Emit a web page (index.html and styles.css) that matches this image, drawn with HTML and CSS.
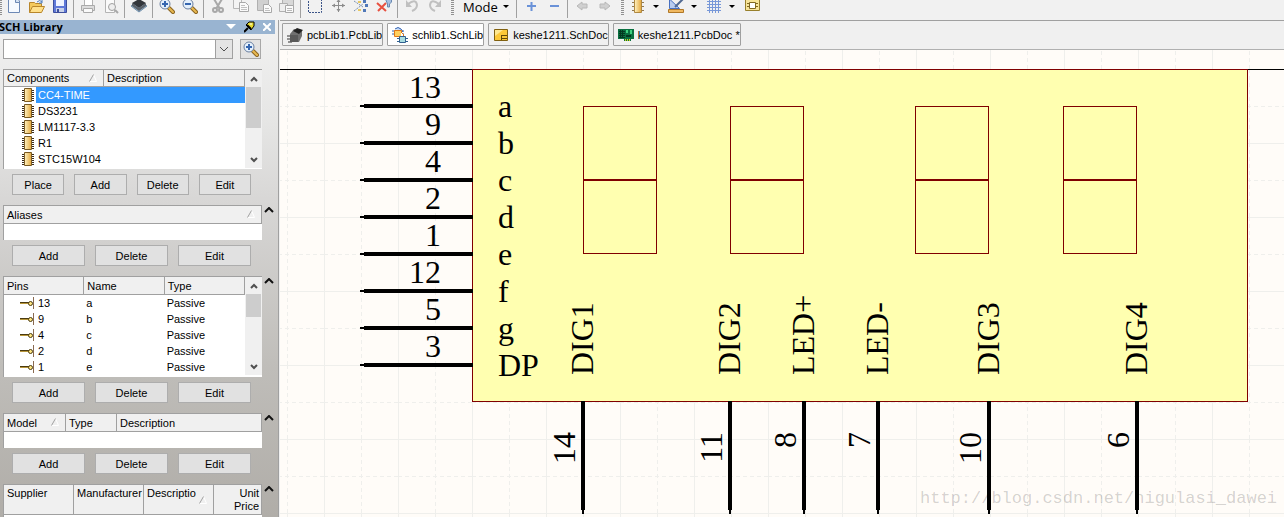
FILE: index.html
```
<!DOCTYPE html>
<html lang="en">
<head>
    <meta charset="UTF-8">
    <meta name="viewport" content="width=device-width, initial-scale=1.0">
    <title>schlib1.SchLib</title>
    <link rel="stylesheet" href="styles.css">
</head>
<body>
    <!-- Shared icons -->
    <svg class="sprite" aria-hidden="true">
        <defs>
            <linearGradient id="gold" x1="0" x2="1">
                <stop offset="0" stop-color="#fff3c4"/>
                <stop offset="1" stop-color="#e3a63a"/>
            </linearGradient>
        </defs>
        <symbol id="chip" viewBox="0 0 12 14">
            <path d="M0 2.5h12M0 4.5h12M0 6.5h12M0 8.5h12M0 10.5h12M0 12.5h12" stroke="#3b2d1c"/>
            <path d="M2.5.5h7v13h-7z" fill="url(#gold)" stroke="#7a5a22"/>
        </symbol>
        <symbol id="pin" viewBox="0 0 14 12">
            <path d="M0 6h9" stroke="#4a3a10" stroke-width="2"/>
            <path d="M0 6.5h9" stroke="#b8963a"/>
            <circle cx="10.5" cy="6.5" r="2" fill="#ffe680" stroke="#4a3a10"/>
            <path d="M13.5 0v12" stroke="#8a6a50"/>
        </symbol>
        <symbol id="sort" viewBox="0 0 8 8">
            <path d="M4.5.5l3 7h-7" fill="none" stroke="#fff"/>
            <path d="M.5 7.5l4-7" stroke="#a0a0a0"/>
        </symbol>
        <symbol id="collapse" viewBox="0 0 10 6">
            <path d="M1 5l4-4 4 4" fill="none" stroke="#111" stroke-width="2"/>
        </symbol>
        <symbol id="up" viewBox="0 0 8 6">
            <path d="M1 5l3-3 3 3" fill="none" stroke="#505050" stroke-width="2"/>
        </symbol>
        <symbol id="down" viewBox="0 0 8 6">
            <path d="M1 1l3 3 3-3" fill="none" stroke="#505050" stroke-width="2"/>
        </symbol>
        <symbol id="caret" viewBox="0 0 6 4">
            <path d="M0 0h6L3 3z"/>
        </symbol>
        <symbol id="zoom-in" viewBox="0 0 16 16">
            <path d="M10 10l4 4" stroke="#8a6420" stroke-width="4" stroke-linecap="round"/>
            <path d="M10 10l4 4" stroke="#e8b850" stroke-width="2" stroke-linecap="round"/>
            <circle cx="6" cy="6" r="5" fill="#e4f0fc" stroke="#6a7fa0"/>
            <path d="M3 6h6M6 3v6" stroke="#3566b0" stroke-width="2"/>
        </symbol>
        <symbol id="zoom-out" viewBox="0 0 16 16">
            <path d="M10 10l4 4" stroke="#8a6420" stroke-width="4" stroke-linecap="round"/>
            <path d="M10 10l4 4" stroke="#e8b850" stroke-width="2" stroke-linecap="round"/>
            <circle cx="6" cy="6" r="5" fill="#e4f0fc" stroke="#6a7fa0"/>
            <path d="M3 6h6" stroke="#3566b0" stroke-width="2"/>
        </symbol>
    </svg>

    <div class="toolbar">
        <span class="grip"></span>
        <button class="tool" aria-label="New"><svg viewBox="0 2 16 14"><path d="M2.5 0h8l3 3v11.5h-11z" fill="#f6faff" stroke="#6d89b5"/><path d="M9.5 0v4.5h4" fill="#cfdff3" stroke="#6d89b5"/></svg></button>
        <button class="tool" aria-label="Open"><svg viewBox="0 2 16 14"><path d="M.5 14.5V4.500h5l1 1h6v3" fill="#f4c95c" stroke="#b8862b"/><path d="M.5 14.5l3-6h12l-3 6z" fill="#ffe08a" stroke="#b8862b"/><path d="M8 4q3-3 5 0m0-2v3h-3" fill="none" stroke="#4b7cc0"/></svg></button>
        <button class="tool" aria-label="Save"><svg viewBox="0 2 16 14"><path d="M1.5 1.5h13v13h-13z" fill="#5f79d8" stroke="#3d4f9e"/><path d="M4 1h8v7H4z" fill="#f0f4ff"/><path d="M4 10h8v4H4z" fill="#c9d2e8"/><path d="M5 11h2v3H5z" fill="#3d4f9e"/></svg></button>
        <span class="sep"></span>
        <button class="tool" aria-label="Print"><svg viewBox="0 2 16 14"><path d="M4.5 7V1h8v6" fill="#fff" stroke="#b4b4b4"/><path d="M1.5 7.5h13v5h-13z" fill="#dcdcdc" stroke="#aaa"/><path d="M3.5 10.500h9v4h-9z" fill="#fafafa" stroke="#aaa"/></svg></button>
        <button class="tool" aria-label="Print preview"><svg viewBox="0 2 16 14"><path d="M2.5 0h9v14.5h-9z" fill="#fafafa" stroke="#b4b4b4"/><circle cx="9" cy="9" r="3.5" fill="#eee" stroke="#a0a0a0"/><path d="M12 12l3 3" stroke="#a8a8a8" stroke-width="2"/></svg></button>
        <span class="sep"></span>
        <button class="tool" aria-label="Component browser"><svg viewBox="0 2 16 14"><path d="M0 8l8-5 8 5-8 6z" fill="#a8c4dc" stroke="#6d8ca8"/><path d="M1 5l7-4 7 4-7 5z" fill="#33373c"/><path d="M1 5v3l7 5 7-5V5l-7 5z" fill="#5b626a"/></svg></button>
        <span class="sep"></span>
        <button class="tool" aria-label="Zoom in"><svg viewBox="0 2 16 14"><use href="#zoom-in" width="16" height="16"/></svg></button>
        <button class="tool" aria-label="Zoom out"><svg viewBox="0 2 16 14"><use href="#zoom-out" width="16" height="16"/></svg></button>
        <span class="sep"></span>
        <button class="tool" aria-label="Cut"><svg viewBox="0 2 16 14"><path d="M4 1l6 10M12 1L6 11" stroke="#a8a8a8" stroke-width="2"/><circle cx="5" cy="12" r="2" fill="none" stroke="#a8a8a8" stroke-width="2"/><circle cx="11" cy="12" r="2" fill="none" stroke="#a8a8a8" stroke-width="2"/></svg></button>
        <button class="tool" aria-label="Copy"><svg viewBox="0 2 16 14"><path d="M.5 1.5h8v9h-8z" fill="#f4f4f4" stroke="#b8b8b8"/><path d="M6.5 4.5h6l3 3v6h-9z" fill="#fafafa" stroke="#a8a8a8"/><path d="M8 7.5h4M8 9.5h6M8 11.5h6" stroke="#c0c0c0"/></svg></button>
        <button class="tool" aria-label="Paste"><svg viewBox="0 2 16 14"><path d="M1.5 1.5h11v11h-11z" fill="#d0d0d0" stroke="#b0b0b0"/><path d="M7.5 6.5h5l3 3v5h-8z" fill="#fafafa" stroke="#a8a8a8"/><path d="M9 10.5h4M9 12.5h5" stroke="#c0c0c0"/></svg></button>
        <button class="tool" aria-label="Smart paste"><svg viewBox="0 2 16 14"><path d="M3.5 1.5h11v10h-11z" fill="#d8d8d8" stroke="#b0b0b0"/><path d="M.5 5.5h8v8h-8z" fill="#eee" stroke="#b0b0b0"/><path d="M6.5 7.5h8v7h-8z" fill="#fafafa" stroke="#a8a8a8"/><path d="M8 10.5h5M8 12.5h5" stroke="#b8b8b8"/></svg></button>
        <span class="sep"></span>
        <button class="tool" aria-label="Select area"><svg viewBox="0 2 16 14"><path d="M1.5 0v14.5h13V0" fill="none" stroke="#3c5488" stroke-dasharray="2 1"/></svg></button>
        <button class="tool" aria-label="Move"><svg viewBox="0 2 16 14"><path d="M8.5 1v13M2 7.5h13" stroke="#8c8c8c"/><path d="M6.5 4l2-3 2 3zM6.5 11l2 3 2-3zM5 5.500l-3 2 3 2zM12 5.500l3 2-3 2z" fill="#8c8c8c"/></svg></button>
        <button class="tool" aria-label="Deselect all"><svg viewBox="0 2 16 14"><path d="M1 3l9 6M1 13l9-7" stroke="#7890b0" stroke-dasharray="2 1"/><path d="M10 2h3v3h-3zM12 6h3v3h-3zM10 11h3v3h-3z" fill="#5078b8"/><path d="M5 3h3v2H5zM5 11h3v2H5z" fill="#e8c860"/></svg></button>
        <button class="tool" aria-label="Clear filter"><svg viewBox="0 2 16 14"><path d="M9.5 1h6v3l-2 2v3h-2V6z" fill="#a8c0e0" stroke="#6888b0"/><path d="M1 5l9 8M10 5l-8 8" stroke="#e85040" stroke-width="2"/></svg></button>
        <span class="sep"></span>
        <button class="tool" aria-label="Undo"><svg viewBox="0 2 16 14"><path d="M4 6q8-6 9 1 0 4-5 6" fill="none" stroke="#c0c0c0" stroke-width="2"/><path d="M2 2v7h6z" fill="#c0c0c0"/></svg></button>
        <button class="tool" aria-label="Redo"><svg viewBox="0 2 16 14"><path d="M12 6q-8-6-9 1 0 4 5 6" fill="none" stroke="#c0c0c0" stroke-width="2"/><path d="M14 2v7H8z" fill="#c0c0c0"/></svg></button>
        <span class="grip grip-inner"></span>
        <button class="mode">Mode <svg class="caret"><use href="#caret"/></svg></button>
        <span class="sep"></span>
        <button class="tool" aria-label="Add mode"><svg viewBox="0 2 16 14"><path d="M4 8h9M8.500 4v9" stroke="#6a92d8" stroke-width="2"/></svg></button>
        <button class="tool" aria-label="Remove mode"><svg viewBox="0 2 16 14"><path d="M4 8h9" stroke="#6a92d8" stroke-width="2"/></svg></button>
        <span class="sep"></span>
        <button class="tool" aria-label="Previous mode"><svg viewBox="0 2 16 14"><path d="M3 8l5-4v2h5v4H8v2z" fill="#d0d0d0" stroke="#b8b8b8"/></svg></button>
        <button class="tool" aria-label="Next mode"><svg viewBox="0 2 16 14"><path d="M13 8L8 4v2H3v4h5v2z" fill="#d0d0d0" stroke="#b8b8b8"/></svg></button>
        <span class="grip grip-inner"></span>
        <button class="tool-menu" aria-label="Place part"><svg viewBox="0 2 16 14"><path d="M2 4.500h12M2 8.500h12M2 12.500h12" stroke="#907850"/><path d="M4.500 1.500h7v13h-7z" fill="url(#gold)" stroke="#b08840"/></svg><svg class="caret"><use href="#caret"/></svg></button>
        <button class="tool-menu" aria-label="Drawing tools"><svg viewBox="0 2 16 14"><path d="M1.500 1v9.500h10z" fill="#b8ccf0" stroke="#4870c0"/><path d="M7 9l8-8" stroke="#506890" stroke-width="2"/><path d="M.5 11.500h15v3H.5z" fill="#f0b860" stroke="#b07828"/></svg><svg class="caret"><use href="#caret"/></svg></button>
        <button class="tool-menu" aria-label="Grids"><svg viewBox="0 2 16 14"><path d="M3.500 1v14M6.500 1v14M9.500 1v14M12.500 1v14M1 3.500h14M1 6.500h14M1 9.500h14M1 12.500h14" stroke="#7898d8"/></svg><svg class="caret"><use href="#caret"/></svg></button>
        <button class="tool-menu" aria-label="Model manager"><svg viewBox="0 2 16 14"><path d="M1.500 1.500h14v11h-14z" fill="#f8e498" stroke="#98802c"/><path d="M3 5.500h11M3 8.500h11" stroke="#806820"/><path d="M5.500 4.500h6v6h-6z" fill="#fff" stroke="#806820"/></svg></button>
    </div>

    <main class="main">
        <aside class="panel">
            <div class="panel-title">
                <h1>SCH Library</h1>
                <button aria-label="Panel menu"><svg width="10" height="6" viewBox="0 0 10 6"><path d="M0 0h10L5 5z" fill="#fff"/></svg></button>
                <button aria-label="Pin panel"><svg width="11" height="12" viewBox="0 0 11 12"><path d="M0 11l4-4" stroke="#000" stroke-width="2"/><path d="M2 4l3-3h5v4L7 9z" fill="#e8dc30" stroke="#000"/><path d="M6 3h2" stroke="#fff"/><path d="M3 4l4 4" stroke="#000" stroke-width="2"/></svg></button>
                <button aria-label="Close panel"><svg width="8" height="8" viewBox="0 0 8 8"><path d="M0 0l8 8M8 0L0 8" stroke="#fff" stroke-width="2"/></svg></button>
            </div>

            <div class="filter">
                <div class="combo">
                    <select aria-label="Filter"><option></option></select>
                    <span class="combo-arrow"><svg width="10" height="6" viewBox="0 0 10 6"><path d="M1 1l4 4 4-4" fill="none" stroke="#505050"/></svg></span>
                </div>
                <button class="search" aria-label="Search"><svg width="16" height="16"><use href="#zoom-in"/></svg></button>
            </div>

            <section class="block">
                <div class="list">
                    <table class="components">
                        <thead><tr><th>Components <svg class="sort"><use href="#sort"/></svg></th><th>Description</th></tr></thead>
                        <tbody>
                            <tr class="selected"><td><svg class="chip"><use href="#chip"/></svg><span>CC4-TIME</span></td><td></td></tr>
                            <tr><td><svg class="chip"><use href="#chip"/></svg><span>DS3231</span></td><td></td></tr>
                            <tr><td><svg class="chip"><use href="#chip"/></svg><span>LM1117-3.3</span></td><td></td></tr>
                            <tr><td><svg class="chip"><use href="#chip"/></svg><span>R1</span></td><td></td></tr>
                            <tr><td><svg class="chip"><use href="#chip"/></svg><span>STC15W104</span></td><td></td></tr>
                        </tbody>
                    </table>
                    <div class="scrollbar">
                        <svg><use href="#up"/></svg>
                        <span class="thumb thumb-long"></span>
                        <svg><use href="#down"/></svg>
                    </div>
                </div>
            </section>
            <div class="actions">
                <button>Place</button>
                <button>Add</button>
                <button>Delete</button>
                <button>Edit</button>
            </div>

            <section class="block">
                <div class="list">
                    <table class="aliases">
                        <thead><tr><th>Aliases <svg class="sort"><use href="#sort"/></svg></th></tr></thead>
                        <tbody><tr><td></td></tr></tbody>
                    </table>
                </div>
                <button class="collapse" aria-label="Collapse aliases"><svg><use href="#collapse"/></svg></button>
            </section>
            <div class="actions">
                <button>Add</button>
                <button>Delete</button>
                <button>Edit</button>
            </div>

            <section class="block">
                <div class="list list-pins">
                    <table class="pins">
                        <thead><tr><th>Pins</th><th>Name</th><th>Type</th></tr></thead>
                        <tbody>
                            <tr><td><svg class="pin"><use href="#pin"/></svg><span>13</span></td><td>a</td><td>Passive</td></tr>
                            <tr><td><svg class="pin"><use href="#pin"/></svg><span>9</span></td><td>b</td><td>Passive</td></tr>
                            <tr><td><svg class="pin"><use href="#pin"/></svg><span>4</span></td><td>c</td><td>Passive</td></tr>
                            <tr><td><svg class="pin"><use href="#pin"/></svg><span>2</span></td><td>d</td><td>Passive</td></tr>
                            <tr><td><svg class="pin"><use href="#pin"/></svg><span>1</span></td><td>e</td><td>Passive</td></tr>
                        </tbody>
                    </table>
                    <div class="scrollbar">
                        <svg><use href="#up"/></svg>
                        <span class="thumb"></span>
                        <svg><use href="#down"/></svg>
                    </div>
                </div>
                <button class="collapse" aria-label="Collapse pins"><svg><use href="#collapse"/></svg></button>
            </section>
            <div class="actions">
                <button>Add</button>
                <button>Delete</button>
                <button>Edit</button>
            </div>

            <section class="block">
                <div class="list">
                    <table class="models">
                        <thead><tr><th>Model <svg class="sort"><use href="#sort"/></svg></th><th>Type</th><th>Description</th></tr></thead>
                        <tbody><tr><td></td><td></td><td></td></tr></tbody>
                    </table>
                </div>
                <button class="collapse" aria-label="Collapse models"><svg><use href="#collapse"/></svg></button>
            </section>
            <div class="actions">
                <button>Add</button>
                <button>Delete</button>
                <button>Edit</button>
            </div>

            <section class="block">
                <div class="list">
                    <table class="suppliers">
                        <thead><tr><th>Supplier</th><th>Manufacturer</th><th>Descriptio <svg class="sort"><use href="#sort"/></svg></th><th>Unit Price</th></tr></thead>
                        <tbody><tr><td></td><td></td><td></td><td></td></tr></tbody>
                    </table>
                </div>
                <button class="collapse" aria-label="Collapse suppliers"><svg><use href="#collapse"/></svg></button>
            </section>
        </aside>

        <div class="workspace">
            <nav class="tabs">
                <a href="#" class="tab">
                    <svg viewBox="0 0 16 16"><path d="M0 9h4M0 12h4M1 15h4" stroke="#333"/><path d="M3 7l4-5 8 1v6l-3 6H3z" fill="#707070"/><path d="M6 4l4-3 6 2-4 4z" fill="#222"/><path d="M3 8h8v7H3z" fill="#5a5a5a"/></svg>
                    pcbLib1.PcbLib
                </a>
                <a href="#" class="tab active">
                    <svg viewBox="0 0 16 16"><path d="M0 4h12M0 7h12" stroke="#3060b0"/><path d="M3 2q3-3 6 0l2 3" fill="#c8dcf8" stroke="#3060b0"/><path d="M2.5 3.5h7v6h-7z" fill="#ffd060" stroke="#e07818"/><path d="M9 5l3 3-3 3" fill="#fff" stroke="#e07818"/><path d="M5 11.500h11M5 14.500h11" stroke="#306090"/><path d="M7.5 9.5h6v6h-6z" fill="#a8dce0" stroke="#306090"/></svg>
                    schlib1.SchLib
                </a>
                <a href="#" class="tab">
                    <svg viewBox="0 0 16 16"><path d="M1.5 2.5h13v11h-13z" fill="#fcc838" stroke="#806010"/><path d="M2 3h8L2 9z" fill="#ffe890"/><path d="M9 8.5h5M9 11.5h5M8.5 8v5" stroke="#604808"/></svg>
                    keshe1211.SchDoc
                </a>
                <a href="#" class="tab">
                    <svg viewBox="0 0 16 16"><path d="M0 2h16v10h-3v2H6v-2H0z" fill="#0a7040"/><path d="M1 4.500h6M1 6.500h6M1 8.500h6M1 10.500h6M2.500 3v8M4.500 3v8" stroke="#043820"/><path d="M8 3h2v3H8zM12 3h2v4h-2z" fill="#40d080"/><path d="M8 8h5v2H8z" fill="#043820"/><path d="M7 13h6" stroke="#d0d020" stroke-width="2" stroke-dasharray="1 1"/></svg>
                    keshe1211.PcbDoc *
                </a>
            </nav>

            <svg class="sheet" role="img" aria-label="CC4-TIME symbol">
                <defs>
                    <!-- one tile is two grid steps: a solid and a dashed line each way -->
                    <pattern id="sheet-grid" width="74" height="74" patternUnits="userSpaceOnUse" patternTransform="translate(192 19)">
                        <path class="grid-line" d="M0 0h1v74H0zM0 0h74v1H0z"/>
                        <path class="grid-dash" d="M37 0V74M0 37H74"/>
                    </pattern>
                    <g id="digit">
                        <rect width="73" height="73"/>
                        <rect y="74" width="73" height="73"/>
                    </g>
                    <g id="pin-left">
                        <path class="wire" d="M-108 0H1"/>
                        <path class="tip" d="M-112 0h5"/>
                    </g>
                    <g id="pin-down">
                        <path class="wire" d="M0 0V109"/>
                        <path class="tip" d="M0 108v5"/>
                    </g>
                </defs>
                <rect width="100%" height="100%" fill="url(#sheet-grid)"/>
                <path class="axis" d="M0 19H4000"/>
                <g transform="translate(192 19)">
                    <rect class="body" width="775" height="332"/>

                    <g class="digits">
                        <use href="#digit" x="111" y="37"/>
                        <use href="#digit" x="258" y="37"/>
                        <use href="#digit" x="443" y="37"/>
                        <use href="#digit" x="591" y="37"/>
                    </g>

                    <g transform="translate(0 37)"><use href="#pin-left"/><text class="num" x="-31" y="-8">13</text><text x="26" y="11">a</text></g>
                    <g transform="translate(0 74)"><use href="#pin-left"/><text class="num" x="-31" y="-8">9</text><text x="26" y="11">b</text></g>
                    <g transform="translate(0 111)"><use href="#pin-left"/><text class="num" x="-31" y="-8">4</text><text x="26" y="11">c</text></g>
                    <g transform="translate(0 148)"><use href="#pin-left"/><text class="num" x="-31" y="-8">2</text><text x="26" y="11">d</text></g>
                    <g transform="translate(0 185)"><use href="#pin-left"/><text class="num" x="-31" y="-8">1</text><text x="26" y="11">e</text></g>
                    <g transform="translate(0 222)"><use href="#pin-left"/><text class="num" x="-31" y="-8">12</text><text x="26" y="11">f</text></g>
                    <g transform="translate(0 259)"><use href="#pin-left"/><text class="num" x="-31" y="-8">5</text><text x="26" y="11">g</text></g>
                    <g transform="translate(0 296)"><use href="#pin-left"/><text class="num" x="-31" y="-8">3</text><text x="26" y="11">DP</text></g>

                    <g transform="translate(111 332)"><use href="#pin-down"/><g transform="rotate(-90)"><text class="num" x="-31" y="-8">14</text><text x="26" y="10">DIG1</text></g></g>
                    <g transform="translate(258 332)"><use href="#pin-down"/><g transform="rotate(-90)"><text class="num" x="-31" y="-8">11</text><text x="26" y="10">DIG2</text></g></g>
                    <g transform="translate(332 332)"><use href="#pin-down"/><g transform="rotate(-90)"><text class="num" x="-31" y="-8">8</text><text x="26" y="10">LED+</text></g></g>
                    <g transform="translate(406 332)"><use href="#pin-down"/><g transform="rotate(-90)"><text class="num" x="-31" y="-8">7</text><text x="26" y="10">LED-</text></g></g>
                    <g transform="translate(517 332)"><use href="#pin-down"/><g transform="rotate(-90)"><text class="num" x="-31" y="-8">10</text><text x="26" y="10">DIG3</text></g></g>
                    <g transform="translate(665 332)"><use href="#pin-down"/><g transform="rotate(-90)"><text class="num" x="-31" y="-8">6</text><text x="26" y="10">DIG4</text></g></g>

                    <text class="watermark" x="448" y="434">http://blog.csdn.net/nigulasi_dawei</text>
                </g>
            </svg>
        </div>
    </main>
</body>
</html>
```

FILE: styles.css
```
* {
    margin: 0;
    padding: 0;
    box-sizing: border-box;
}

body {
    height: 100vh;
    display: flex;
    flex-direction: column;
    overflow: hidden;
    background: #f0f0f0;
    color: #000;
    font-family: "Liberation Sans", Arial, sans-serif;
    font-size: 11px;
    line-height: 16px;
}

button {
    border: none;
    background: none;
    color: inherit;
    font: inherit;
}

.sprite {
    position: absolute;
    width: 0;
    height: 0;
}

/* Toolbar */
.toolbar {
    display: flex;
    flex: none;
    height: 20px;
    background: #f1f1f1;
}

.grip {
    width: 2px;
    height: 16px;
    background: repeating-linear-gradient(#909090 0 1px, transparent 1px 2px);
}

.grip-inner {
    width: 3px;
    margin: 0 6px 0 5px;
}

.sep {
    width: 5px;
    height: 18px;
    border-left: 2px solid transparent;
    border-right: 2px solid transparent;
    background: #a0a0a0;
    background-clip: padding-box;
}

.tool {
    width: 23px;
    height: 18px;
    display: flex;
    justify-content: center;
}

.tool svg,
.tool-menu svg {
    width: 16px;
    height: 14px;
}

.mode {
    width: 54px;
    height: 13px;
    padding-left: 3px;
    display: flex;
    align-items: center;
    gap: 5px;
    font-family: "Open Sans", sans-serif;
    font-size: 13px;
}

.caret,
.tool-menu .caret {
    width: 6px;
    height: 4px;
}

.tool-menu {
    height: 14px;
    margin-right: 9px;
    display: flex;
    align-items: center;
    gap: 7px;
}

.main {
    flex: 1;
    min-height: 0;
    display: flex;
}

/* Library panel */
.panel {
    width: 279px;
    flex: none;
    overflow: hidden;
    border-right: 1px solid #a0a0a0;
    background: linear-gradient(#f2f2f2 0%, #e6e6e5 20%, #d8d7d6 36%, #bfbdb9 70%, #b0ada8 100%);
}

.panel-title {
    display: flex;
    align-items: center;
    gap: 8px;
    height: 14px;
    margin-right: 3px;
    padding-right: 4px;
    background: #99b4d1;
}

.panel-title h1 {
    flex: 1;
    margin-left: -1px;
    font-family: "Open Sans", sans-serif;
    font-size: 11px;
    font-weight: 700;
}

.panel-title button,
.search,
.collapse {
    display: flex;
}

.filter {
    display: flex;
    gap: 7px;
    margin: 5px 0 10px 3px;
}

.combo {
    position: relative;
    width: 230px;
    height: 20px;
}

.combo select {
    width: 100%;
    height: 100%;
    appearance: none;
    border: 1px solid #a0a0a0;
    border-radius: 0;
    background: #fff;
    font: inherit;
}

.combo-arrow {
    position: absolute;
    top: 0;
    right: 0;
    width: 18px;
    height: 20px;
    display: flex;
    align-items: center;
    justify-content: center;
    border: 1px solid #a0a0a0;
    background: #e4e4e4;
    pointer-events: none;
}

.search {
    width: 21px;
    height: 20px;
    align-items: center;
    justify-content: center;
    border: 1px solid #a8a8a8;
    background: #e2e2e2;
}

.block {
    display: flex;
    align-items: flex-start;
    gap: 2px;
    padding-left: 3px;
}

.list {
    display: flex;
    width: 259px;
    padding-bottom: 1px;
    border-top: 1px solid #a0a0a0;
    border-left: 1px solid #a0a0a0;
    background: #fff;
}

.list-pins {
    padding-bottom: 2px;
}

.list table {
    flex: 1;
    align-self: flex-start;
    table-layout: fixed;
    width: 0;
    border-collapse: separate;
    border-spacing: 0;
}

.list th {
    position: relative;
    height: 18px;
    padding-left: 3px;
    border-bottom: 1px solid #a0a0a0;
    border-right: 1px solid #a0a0a0;
    background: #f0f0f0;
    font-weight: 400;
    text-align: left;
    white-space: nowrap;
}

.list td {
    height: 16px;
    padding-left: 2px;
    line-height: 16px;
}

.sort {
    position: absolute;
    top: 4px;
    right: 6px;
    width: 8px;
    height: 8px;
}

.components {
    margin-bottom: 1px;
}

.components th {
    height: 17px;
    line-height: 15px;
}

.components th:first-child {
    width: 100px;
}

.components td:first-child,
.pins td:first-child {
    display: flex;
    align-items: center;
    padding-left: 18px;
}

.chip {
    width: 12px;
    height: 14px;
}

.components td span {
    flex: 1;
    margin-left: 2px;
    padding-left: 2px;
}

.selected td span,
.selected td + td {
    background: #3399ff;
    color: #fff;
}

.pin {
    width: 14px;
    height: 12px;
    margin-right: 4px;
}

.pins th,
.pins td:first-child {
    width: 80px;
}

.pins td:first-child {
    padding-left: 16px;
}

.aliases td,
.models td {
    height: 15px;
}

.models th:nth-child(1) {
    width: 62px;
}

.models th:nth-child(2) {
    width: 51px;
}

.suppliers th {
    height: 30px;
    width: 70px;
    line-height: 13px;
    vertical-align: top;
    padding-top: 2px;
}

.suppliers th:last-child {
    width: auto;
    padding-right: 2px;
    text-align: right;
    white-space: normal;
}

.suppliers .sort {
    top: 11px;
}

.scrollbar {
    display: flex;
    flex-direction: column;
    align-items: center;
    width: 17px;
    background: #f0f0f0;
}

.scrollbar svg {
    width: 8px;
    height: 6px;
    margin: 6px 0 5px;
}

.scrollbar svg:last-child {
    margin-top: auto;
}

.thumb {
    width: 15px;
    height: 23px;
    background: #cdcdcd;
}

.thumb-long {
    height: 41px;
}

.collapse {
    margin-top: 2px;
}

.collapse svg {
    width: 10px;
    height: 6px;
}

.actions {
    display: flex;
    gap: 10px;
    margin: 5px 27px 10px 12px;
}

.actions button {
    flex: 1;
    height: 21px;
    border: 1px solid #adadad;
    background: #e1e1e1;
}

/* Document area */
.workspace {
    flex: 1;
    min-width: 0;
    display: flex;
    flex-direction: column;
    padding-left: 1px;
}

.tabs {
    display: flex;
    gap: 4px;
    height: 30px;
    padding: 2px;
    border-top: 1px solid #a0a0a0;
    border-bottom: 1px solid #b0b0b0;
}

.tab {
    display: flex;
    align-items: center;
    gap: 4px;
    height: 23px;
    padding-left: 4px;
    border: 1px solid #a0a0a0;
    border-radius: 1px;
    color: #000;
    text-decoration: none;
    white-space: nowrap;
}

.tab.active {
    background: #fff;
}

.tab svg {
    width: 16px;
    height: 16px;
}

.sheet {
    flex: 1;
    width: 100%;
    min-height: 0;
    background: #fffcf8;
    font-family: "Liberation Serif", "Times New Roman", serif;
    font-size: 32px;
}

.sheet path,
.sheet rect {
    shape-rendering: crispEdges;
}

.grid-line {
    fill: #efefec;
}

.grid-dash {
    stroke: #efefec;
    stroke-dasharray: 4 3;
}

.axis {
    stroke: #000;
}

.body {
    fill: #ffffb0;
    stroke: #800000;
}

.digits {
    fill: none;
    stroke: #800000;
}

.wire {
    stroke: #000;
    stroke-width: 4;
}

.tip {
    stroke: #000;
    stroke-width: 2;
}

.num {
    text-anchor: end;
}

.watermark {
    fill: #000;
    fill-opacity: 0.18;
    font-family: "Liberation Mono", monospace;
    font-size: 17px;
}
```
